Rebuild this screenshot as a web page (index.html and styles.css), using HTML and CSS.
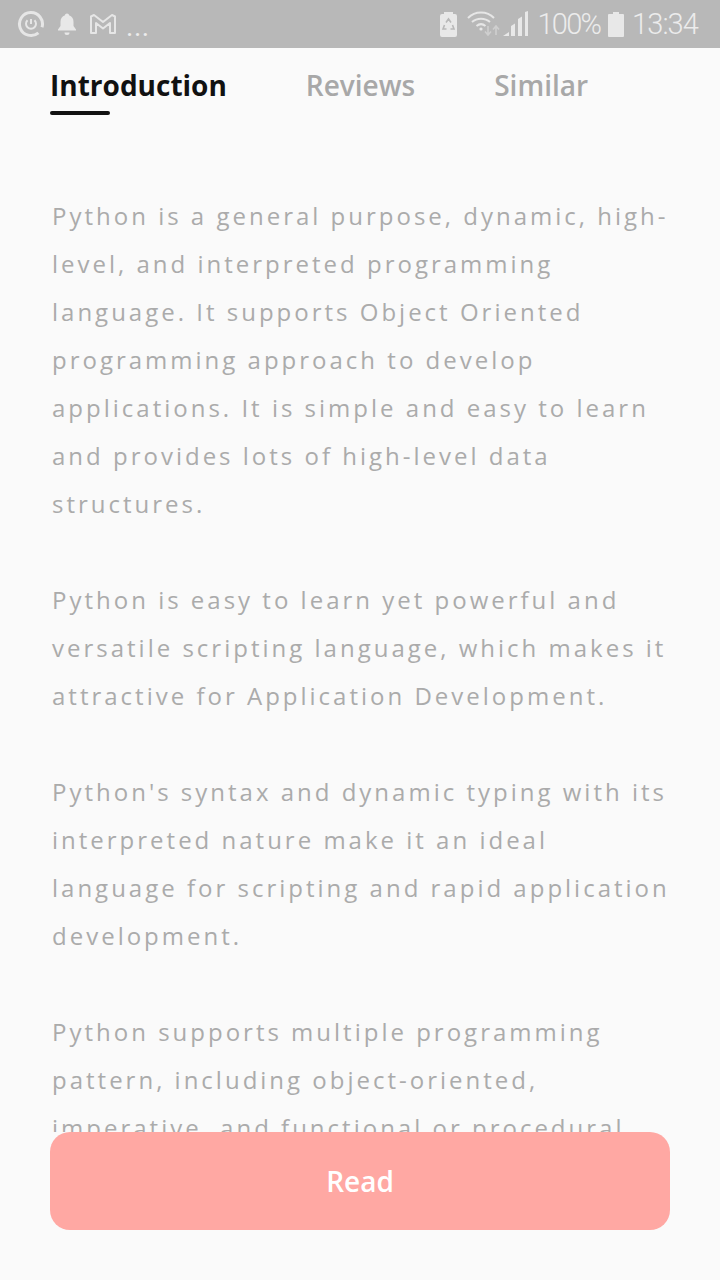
FILE: index.html

```html
<!DOCTYPE html>
<html>
<head>
  <title>Introduction</title>
  <link rel="stylesheet" href="styles.css">
</head>
<body>
  <div class="page">
    <div class="statusBar">
      <div class="statusLeft">
        <svg class="icon" width="28" height="28" viewBox="0 0 28 28" fill="none" stroke="#e6e6e6">
          <path d="M21.400 22.800A11.500 11.500 0 1 1 25 17.300" stroke-width="3"/>
          <path d="M17.500 10.200A5 5 0 1 1 10.500 10.200" stroke-width="2"/>
          <path d="M14 9v5" stroke-width="2"/>
        </svg>
        <svg class="icon" width="20" height="24" viewBox="0 0 20 24" fill="#e8e8e8">
          <path d="M10 1.500c1.200 0 2 .8 2 1.800 3 .8 4.500 3.400 4.500 6.500v4.200l2.500 3.500v1H1v-1l2.500-3.500V9.800c0-3.100 1.500-5.700 4.500-6.500 0-1 .8-1.800 2-1.800z"/>
          <path d="M7.500 20.500h5a2.500 2.500 0 0 1-5 0z"/>
        </svg>
        <svg class="icon" width="28" height="22" viewBox="0 0 28 22" fill="none" stroke="#e6e6e6" stroke-width="2" stroke-linejoin="round">
          <path d="M2 3.500 5 2l9 7 9-7 3 1.500V20h-5V10l-7 5.500L7 10v10H2z"/>
        </svg>
        <span class="moreDots">...</span>
      </div>
      <div class="statusRight">
        <svg class="icon" width="17" height="26" viewBox="0 0 17 26" fill="#e8e8e8">
          <path d="M4 1h9v2h2a2 2 0 0 1 2 2v19a2 2 0 0 1-2 2H2a2 2 0 0 1-2-2V5a2 2 0 0 1 2-2h2z"/>
          <path d="M6 11.500 8.500 8 11 11.500M4.500 14 3 18h3.500M10.500 18H14l-1.500-4" fill="none" stroke="#b8b8b8" stroke-width="1.600"/>
        </svg>
        <svg class="icon wifi" width="34" height="26" viewBox="0 0 34 26" fill="none" stroke="#e6e6e6" stroke-width="2">
          <path d="M1 7c7-7.500 19-7.500 26 0"/>
          <path d="M5 11c5-4.500 13-4.500 18 0"/>
          <path d="M9.500 15c3-2.500 6-2.500 9 0"/>
          <circle cx="14" cy="18" r="1.600" fill="#e6e6e6" stroke="none"/>
          <path d="M21 15v9M18 20.500l3 3.500 3-3.500" stroke="#cfcfcf" stroke-width="1.600"/>
          <path d="M29 24v-9M26 18.500l3-3.500 3 3.500" stroke="#cfcfcf" stroke-width="1.600"/>
        </svg>
        <svg class="icon signal" width="25" height="26" viewBox="0 0 25 26" fill="#e8e8e8">
          <path d="M0 25l6-4v4zM8 15l4-2.500V25H8zM15 8l4-2.500V25h-4zM22 1l3-1v25h-3z"/>
        </svg>
        <span class="statusText percent">100%</span>
        <svg class="icon" width="16" height="26" viewBox="0 0 16 26" fill="#e8e8e8">
          <path d="M5 1h6v2h4a1 1 0 0 1 1 1v21a1 1 0 0 1-1 1H1a1 1 0 0 1-1-1V4a1 1 0 0 1 1-1h4z"/>
        </svg>
        <span class="statusText clock">13:34</span>
      </div>
    </div>

    <div class="tabs">
      <div class="tab active">Introduction</div>
      <div class="tab">Reviews</div>
      <div class="tab">Similar</div>
    </div>

    <div class="content">
      <p>Python is a general purpose, dynamic, high-level, and interpreted programming language. It supports Object Oriented programming approach to develop applications. It is simple and easy to learn and provides lots of high-level data structures.</p>
      <p>Python is easy to learn yet powerful and versatile scripting language, which makes it attractive for Application Development.</p>
      <p>Python's syntax and dynamic typing with its interpreted nature make it an ideal language for scripting and rapid application development.</p>
      <p>Python supports multiple programming pattern, including object-oriented, imperative, and functional or procedural programming styles.</p>
    </div>

    <div class="readButton">Read</div>
  </div>
</body>
</html>
```

FILE: styles.css

```css
html, body { margin: 0; padding: 0; }

body
{
    background: #fafafa;
    font-family: "Open Sans", sans-serif;
}

.page
{
    width: 720px;
    height: 1280px;
    display: flex;
    flex-direction: column;
    overflow: hidden;
}

.statusBar
{
    height: 48px;
    flex: none;
    background: #b8b8b8;
    display: flex;
    justify-content: space-between;
    align-items: center;
    padding: 0 22px 0 17px;
    color: #ececec;
}

.statusLeft, .statusRight
{
    display: flex;
    align-items: center;
}

.statusLeft { gap: 12px; }
.statusRight { gap: 8px; }

.icon { display: block; flex: none; }

.moreDots
{
    font: 28px "Roboto", sans-serif;
    letter-spacing: 0.500px;
    margin: 4px 0 0 -3px;
}

.wifi { margin-left: 2px; }
.signal { margin-left: -6px; }

.statusText
{
    font: 300 29px "Roboto", sans-serif;
    line-height: 48px;
}

.percent { margin-left: 2px; letter-spacing: -1.800px; }
.clock { letter-spacing: -0.900px; }

.tabs
{
    height: 74px;
    flex: none;
    display: flex;
    gap: 79px;
    padding-left: 50px;
}

.tab
{
    position: relative;
    font-size: 28px;
    font-weight: 600;
    line-height: 74px;
    color: #a8a8a8;
}

.tab.active { color: #111111; font-weight: 700; }

.tab.active::after
{
    content: "";
    position: absolute;
    left: 0;
    top: 63px;
    width: 60px;
    height: 4px;
    border-radius: 2px;
    background: #111111;
}

.content
{
    flex: 1;
    min-height: 0;
    overflow: hidden;
    padding: 70px 50px 0 52px;
}

.content p
{
    margin: 0 0 48px;
    font-size: 24px;
    line-height: 48px;
    letter-spacing: 3px;
    color: #ababab;
}

.readButton
{
    height: 98px;
    flex: none;
    margin: 0 50px 50px;
    border-radius: 20px;
    background: #ffa8a3;
    color: #ffffff;
    font-size: 28px;
    font-weight: 600;
    line-height: 98px;
    text-align: center;
}
```
